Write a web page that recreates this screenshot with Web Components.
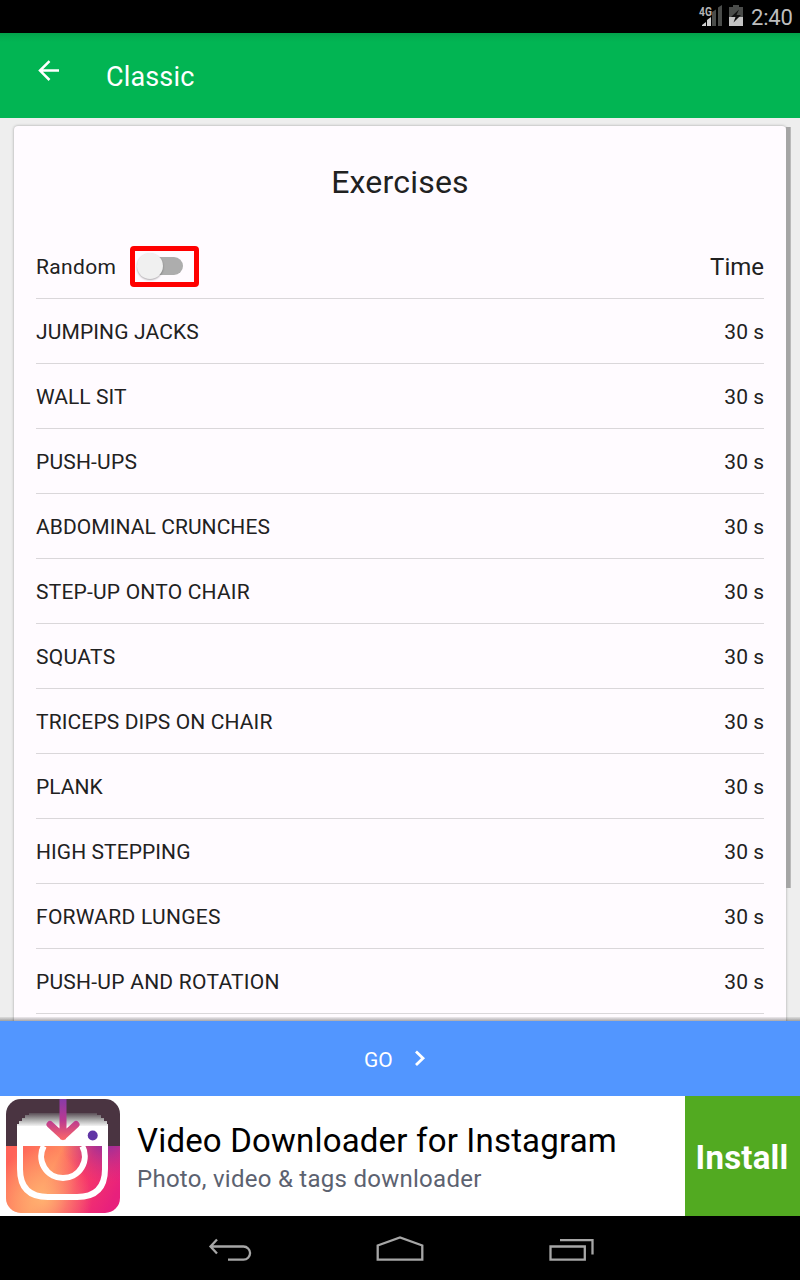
<!DOCTYPE html>
<html lang="en">
<head>
<meta charset="utf-8">
<title>Classic</title>
<style>
html,body{margin:0;padding:0;background:#000}
body{font-family:Roboto,sans-serif;width:800px;height:1280px;overflow:hidden}
</style>
</head>
<body>
<workout-app></workout-app>
<script>
const define = (name, html, after) => customElements.define(name, class extends HTMLElement {
  connectedCallback() {
    if (this.shadowRoot) return;
    const t = document.createElement('template');
    t.innerHTML = html;
    this.attachShadow({mode: 'open'}).append(t.content.cloneNode(true));
    if (after) after(this, this.shadowRoot);
  }
});

define('status-bar', `
<style>
:host{display:flex;height:33px;background:#000;justify-content:flex-end;box-sizing:border-box;padding-right:8px}
span{font-size:22px;line-height:35px;color:#bebebe;letter-spacing:-.2px;width:41px;text-align:right;white-space:nowrap}
svg{display:block;margin-right:7px}
</style>
<svg width="46" height="33" viewBox="698 0 46 33">
<g fill="#4a4c4a"><path d="M712 26V12L716 9.500V26Z"/><path d="M718 26V7.500L722 5V26Z"/></g>
<path d="M702 26V25L706 22V26ZM707 26V20L711 17V26Z" fill="#d0d0d0"/>
<path d="M729 7h4V5h6v2h4v10h-14z" fill="#4a4c4a"/><path d="M729 17h14v9h-14z" fill="#c4c4c4"/>
<path d="M739 9.500l-8 7.500h4.500l-2 5.500 7.500-7.500h-4.500z" fill="#111"/>
<text transform="translate(699 15.500) scale(.82 1)" font-family="Roboto" font-size="12.500" font-weight="700" fill="#b4b4b4">4G</text>
</svg><span>2:40</span>`);

define('app-header', `
<style>
:host{display:flex;height:85px;background:linear-gradient(#03a24b,#02ad50 4px,#02b553 9px);color:#fff}
svg{margin:27px 0 0 38px;display:block}
h1{margin:2px 0 0 46px;font-weight:400;font-size:27px;line-height:85px;letter-spacing:.15px}
</style>
<svg width="22" height="22" viewBox="0 0 22 22" fill="none" stroke="#fff" stroke-width="2.500"><path d="M11.500 1.200L2 10.600L11.500 20M2 10.600H21"/></svg>
<h1><slot></slot></h1>`);

define('random-switch', `
<style>
:host{display:flex;box-sizing:border-box;width:69px;height:41px;border:5px solid #f00;border-radius:4px;align-items:center;padding:0 11px 0 0;justify-content:flex-end}
i{display:block;width:35px;height:18px;border-radius:9px;background:#adadad;position:relative}
i::before{content:"";position:absolute;left:-11px;top:-4px;width:26px;height:26px;border-radius:50%;background:#f0f0f0;box-shadow:0 1px 2px #0005}
</style><i></i>`);

define('exercise-row', `
<style>
:host{display:flex;height:65px;box-sizing:border-box;border-bottom:1px solid #dad7da;align-items:center;justify-content:space-between;font-size:21px;line-height:30px;letter-spacing:var(--tracking,.14px);color:#212121;padding-top:2px}
span{letter-spacing:0}
</style><slot></slot><span>30 s</span>`);

define('exercise-card', `
<style>
:host{display:block;height:1000px;background:#fffbff;border-radius:4px;box-shadow:0 0 3px #0005;padding:0 22px;color:#212121}
h2{margin:0;padding-top:30px;height:52px;line-height:52px;font-weight:400;font-size:32px;letter-spacing:.2px;text-align:center}
header{display:flex;align-items:center;margin-top:26px;height:64px;border-bottom:1px solid #dad7da}
.r{font-size:21px;letter-spacing:.35px;width:94px;padding-top:2px}
.t{font-size:24px;margin-left:auto;padding-top:2px}
</style>
<h2>Exercises</h2>
<header><span class="r">Random</span><random-switch></random-switch><span class="t">Time</span></header>
<slot></slot>`);

define('scroll-pane', `
<style>
:host{display:block;height:903px;overflow:hidden;background:#eee;position:relative;box-sizing:border-box;padding:8px 14px 0}
.bar{position:absolute;left:786px;top:9px;width:5px;height:761px;box-sizing:border-box;background:#a5a5a5;border-right:1px solid #bababa}
.shade{position:absolute;left:0;right:0;bottom:0;height:4px;background:linear-gradient(#0001,#0005)}
</style><slot></slot><div class="bar"></div><div class="shade"></div>`);

define('go-button', `
<style>
:host{display:flex;height:75px;background:#5296ff;color:#fff;align-items:center;box-sizing:border-box;padding-left:364px;font-size:21px}
span{width:50px;padding-top:2px}
svg{display:block}
</style><span><slot></slot></span>
<svg width="12" height="18" viewBox="0 0 12 18" fill="none" stroke="#fff" stroke-width="2.800"><path d="M2 1.500L9 8.200L2 15"/></svg>`);

define('ad-banner', `
<style>
:host{display:flex;height:120px;background:#fff}
svg{display:block;margin:3px 0 0 6px}
.c{margin-left:17px;white-space:nowrap;flex:1}
.a{font-size:33px;line-height:40px;margin-top:25px;color:#000;letter-spacing:.18px}
.b{font-size:24px;line-height:30px;margin-top:3px;color:#5c6270;letter-spacing:.27px}
button{appearance:none;border:0;border-radius:0;padding:3px 1px 0 0;width:115px;background:#52aa21;color:#fff;font:700 33px Roboto,sans-serif;letter-spacing:.2px}
</style>
<svg width="114" height="114" viewBox="0 0 114 114">
<defs>
<linearGradient id="g" x1="0" y1=".3" x2="1" y2=".6"><stop offset="0" stop-color="#ff6258"/><stop offset=".38" stop-color="#ff8a60"/><stop offset=".65" stop-color="#f83a68"/><stop offset="1" stop-color="#e8207c"/></linearGradient>
<radialGradient id="y" gradientUnits="userSpaceOnUse" cx="36" cy="100" r="50"><stop offset="0" stop-color="#ffb070"/><stop offset="1" stop-color="#ffb070" stop-opacity="0"/></radialGradient>
<radialGradient id="p" gradientUnits="userSpaceOnUse" cx="100" cy="38" r="46"><stop offset="0" stop-color="#7c2fa8"/><stop offset="1" stop-color="#c02a90" stop-opacity="0"/></radialGradient>
<linearGradient id="w" x1="0" y1="0" x2="0" y2="1"><stop offset="0" stop-color="#5a4d56"/><stop offset=".45" stop-color="#a5a5a5"/><stop offset="1" stop-color="#fff"/></linearGradient>
<linearGradient id="v" gradientUnits="userSpaceOnUse" x1="57" y1="0" x2="57" y2="42"><stop offset="0" stop-color="#883ba8"/><stop offset=".5" stop-color="#b93991"/><stop offset="1" stop-color="#ff6965"/></linearGradient>
<clipPath id="c"><rect width="114" height="114" rx="15"/></clipPath>
</defs>
<g clip-path="url(#c)">
<path d="M0 0h114v48H0z" fill="#4a3441"/>
<path d="M0 47h114v67H0z" fill="url(#g)"/><path d="M0 47h114v67H0z" fill="url(#y)"/><path d="M0 47h114v67H0z" fill="url(#p)"/>
<path d="M11 28V25h2v-3h3v-3h3v-3h4v-2h68v2h4v3h3v3h3v3h1v3z" fill="url(#w)"/>
<path d="M11 27H102V47H11z" fill="#fff"/>
<path d="M14 45V70Q14 98 42 98H71Q99 98 99 70V45" fill="none" stroke="#fff" stroke-width="6"/>
<path d="M37.800 47A21.800 21.800 0 1 0 76.200 47" fill="none" stroke="#fff" stroke-width="6"/>
<path d="M57 0V37.500M44 25.500L57 37.500L70 25.500" fill="none" stroke="url(#v)" stroke-width="7" stroke-linejoin="round" stroke-linecap="round"/>
<circle cx="86.700" cy="36.500" r="5" fill="#6035a5"/>
</g></svg>
<div class="c"><div class="a">Video Downloader for Instagram</div><div class="b">Photo, video &amp; tags downloader</div></div>
<button>Install</button>`);

define('nav-bar', `
<style>:host{display:block;height:64px;background:#000}svg{display:block}</style>
<svg width="800" height="64" viewBox="0 1216 800 64" fill="none" stroke="#a6a6a6" stroke-width="2.300">
<path d="M217 1239.500L210.500 1246.500L217 1253.500M211 1246.500H243.500A6.600 6.600 0 0 1 243.500 1259.700H228"/>
<path d="M377.700 1259.700V1245.500L400 1237.500L422.300 1245.500V1259.700Z"/>
<path d="M550.500 1246.500H584.800V1259.700H550.500ZM560 1240.200H592.500V1254.500"/>
</svg>`);

define('workout-app', `
<style>:host{display:flex;flex-direction:column;width:800px;height:1280px;overflow:hidden}</style>
<status-bar></status-bar>
<app-header>Classic</app-header>
<scroll-pane><exercise-card></exercise-card></scroll-pane>
<go-button>GO</go-button>
<ad-banner></ad-banner>
<nav-bar></nav-bar>`, (host, root) => {
  const card = root.querySelector('exercise-card');
  const exercises = [
    ['JUMPING JACKS', .12], ['WALL SIT', .04], ['PUSH-UPS', .2], ['ABDOMINAL CRUNCHES', .07],
    ['STEP-UP ONTO CHAIR', .2], ['SQUATS', .35], ['TRICEPS DIPS ON CHAIR', .12], ['PLANK', 0],
    ['HIGH STEPPING', .07], ['FORWARD LUNGES', .28], ['PUSH-UP AND ROTATION', .25]
  ];
  for (const [name, tracking] of exercises) {
    const row = document.createElement('exercise-row');
    row.textContent = name;
    row.style.setProperty('--tracking', tracking + 'px');
    card.append(row);
  }
});
</script>
</body>
</html>
